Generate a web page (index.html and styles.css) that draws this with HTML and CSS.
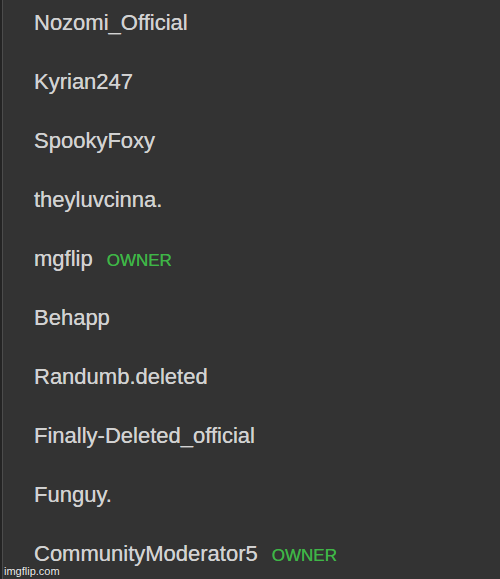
FILE: index.html
```html
<!DOCTYPE html>
<html>
<head>
<meta charset="utf-8">
<link rel="stylesheet" href="styles.css">
</head>
<body>
<div class="panel">
  <ul class="members">
    <li class="member"><span class="name">Nozomi_Official</span></li>
    <li class="member"><span class="name">Kyrian247</span></li>
    <li class="member"><span class="name">SpookyFoxy</span></li>
    <li class="member"><span class="name">theyluvcinna.</span></li>
    <li class="member"><span class="name">mgflip</span><span class="tag">OWNER</span></li>
    <li class="member"><span class="name">Behapp</span></li>
    <li class="member"><span class="name">Randumb.deleted</span></li>
    <li class="member"><span class="name">Finally-Deleted_official</span></li>
    <li class="member"><span class="name">Funguy.</span></li>
    <li class="member"><span class="name">CommunityModerator5</span><span class="tag">OWNER</span></li>
  </ul>
  <div class="watermark">imgflip.com</div>
</div>
</body>
</html>
```
FILE: styles.css
```css
html, body {
  margin: 0;
  padding: 0;
  background: #333333;
}
.panel {
  position: relative;
  width: 500px;
  height: 579px;
  box-sizing: border-box;
  border-left: 2px solid #242424;
  box-shadow: inset 1px 0 0 #4c4c4c;
  overflow: hidden;
  font-family: "Liberation Sans", Arial, sans-serif;
}
.members {
  list-style: none;
  margin: 0;
  padding: 0 0 0 32px;
}
.member {
  display: flex;
  align-items: baseline;
  height: 59px;
  box-sizing: border-box;
  padding-top: 12px;
  line-height: 22px;
}
.name {
  font-size: 22px;
  color: #d2d2d2;
  text-shadow: 0 0 0.6px #d2d2d2;
}
.tag {
  font-size: 17px;
  color: #3fb647;
  margin-left: 14px;
  text-shadow: 0 0 0.6px #3fb647;
}
.watermark {
  position: absolute;
  left: 2px;
  bottom: 2px;
  font-size: 11px;
  color: #f2f2f2;
  text-shadow: 0 0 1px #000;
}
```
